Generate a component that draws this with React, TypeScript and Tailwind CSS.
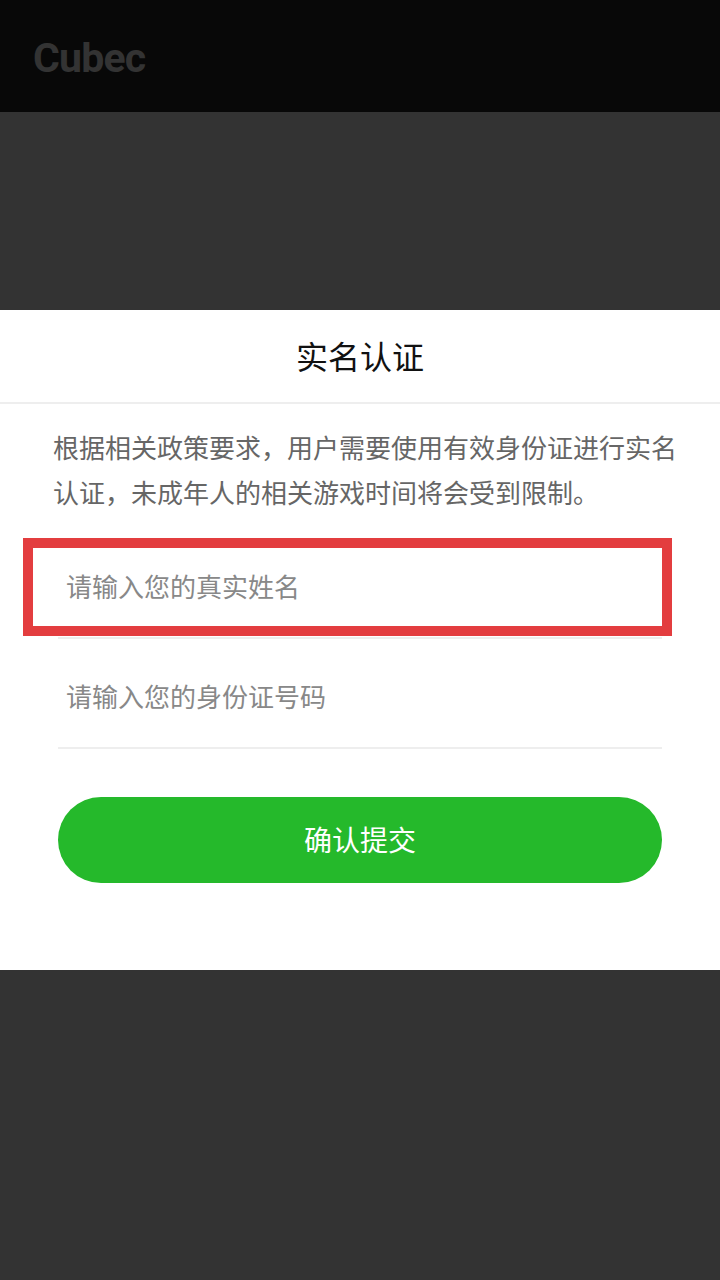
import React from "react";

const cjk = { fontFamily: '"Noto Sans CJK SC", "Noto Sans", sans-serif' };

export default function App() {
  return (
    <div className="min-h-[1280px] w-[720px] bg-[#333333] flex flex-col" style={cjk}>
      <div className="h-[112px] bg-[#080808] flex items-center pl-[33px] pt-[5px]">
        <span
          className="text-[41px] font-bold text-[#333333] leading-none tracking-[-0.8px]"
          style={{ fontFamily: 'Roboto, "Liberation Sans", sans-serif' }}
        >
          Cubec
        </span>
      </div>
      <div className="h-[198px]" />
      <div className="bg-white flex flex-col">
        <div className="h-[94px] flex items-center justify-center border-b-2 border-[#eeeeee]">
          <span className="text-[32px] leading-none text-[#111111] pb-[2px]">实名认证</span>
        </div>
        <p className="pl-[53px] pr-[40px] pt-[20px] text-[26px] leading-[45px] text-[#666666]">
          根据相关政策要求，用户需要使用有效身份证进行实名认证，未成年人的相关游戏时间将会受到限制。
        </p>
        <div className="mx-[58px] mt-[15px] flex flex-col">
          <div className="relative h-[110px] border-b-2 border-[#eeeeee] flex items-center pl-[8px] pt-[6px]">
            <span className="text-[26px] leading-none text-[#888888]">请输入您的真实姓名</span>
            <div className="absolute left-[-35px] right-[-10px] top-[9px] h-[98px] border-[10px] border-[#e33d3f]" />
          </div>
          <div className="h-[110px] border-b-2 border-[#eeeeee] flex items-center pl-[8px] pt-[6px]">
            <span className="text-[26px] leading-none text-[#888888]">请输入您的身份证号码</span>
          </div>
          <button className="mt-[48px] h-[86px] w-full rounded-full bg-[#25b92b] flex items-center justify-center pb-[2px]">
            <span className="text-[28px] leading-none text-white">确认提交</span>
          </button>
        </div>
        <div className="h-[87px]" />
      </div>
      <div className="flex-1" />
    </div>
  );
}
